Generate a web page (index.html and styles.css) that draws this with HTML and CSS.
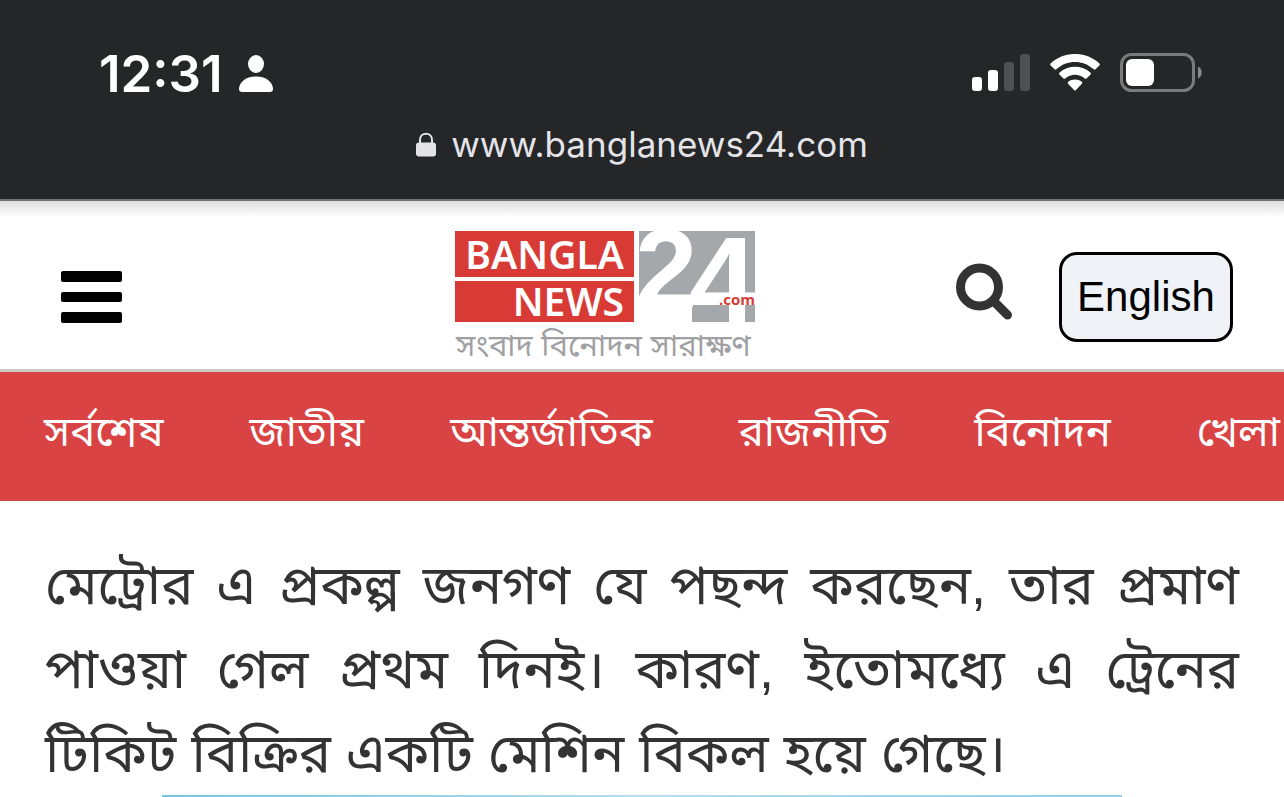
FILE: index.html
```
<!DOCTYPE html>
<html lang="bn">
<head>
    <meta charset="utf-8">
    <meta name="viewport" content="width=device-width, initial-scale=1">
    <title>banglanews24.com</title>
    <link rel="stylesheet" href="styles.css">
</head>
<body>
    <div class="browser-bar">
        <div class="status">
            <div class="status-left">
                <span class="time">12:31</span>
                <svg class="person" width="34" height="37" viewBox="0 0 34 37" fill="#fff">
                    <ellipse cx="17" cy="9" rx="8" ry="9"/>
                    <path d="M3 37C1 37 0 36 0 34C0 28 6 21.500 17 21.500S34 28 34 34C34 36 33 37 31 37Z"/>
                </svg>
            </div>
            <div class="status-right">
                <svg width="58" height="38" viewBox="0 0 58 38" fill="#fff">
                    <rect x="0" y="23" width="10" height="14" rx="3"/>
                    <rect x="16" y="16" width="10" height="21" rx="3"/>
                    <rect x="32" y="8" width="10" height="29" rx="3" fill="#505052"/>
                    <rect x="48" y="0" width="10" height="37" rx="3" fill="#505052"/>
                </svg>
                <svg width="50" height="38" viewBox="0 0 50 38" fill="#fff">
                    <path d="M.6 9.500C14-3.200 36-3.200 49.400 9.500Q50.300 10.500 49.400 11.500L45.500 15.300Q44.600 16 43.700 15.300C33 5.500 17 5.500 6.300 15.300Q5.400 16 4.500 15.300L.6 11.500Q-.3 10.500.6 9.500Z"/>
                    <path d="M9.400 18.700C18 10.800 32 10.800 40.600 18.700Q41.500 19.600 40.600 20.500L36.500 24.500Q35.600 25.200 34.700 24.500C29 19.500 21 19.500 15.300 24.500Q14.400 25.200 13.500 24.500L9.400 20.500Q8.500 19.600 9.400 18.700Z"/>
                    <path d="M18.200 27.800C22 24.700 28 24.700 31.800 27.800Q32.800 28.700 31.900 29.700L26 36Q25 37 24 36L18.100 29.700Q17.200 28.700 18.200 27.800Z"/>
                </svg>
                <svg width="83" height="40" viewBox="0 0 83 40">
                    <rect x="1.500" y="1.500" width="72" height="36" rx="10" fill="none" stroke="#7b7b7d" stroke-width="3"/>
                    <rect x="6" y="6" width="28" height="27" rx="6" fill="#fff"/>
                    <path d="M78 13.500C83 15.500 83 23.500 78 25.500Z" fill="#8b8b8d"/>
                </svg>
            </div>
        </div>
        <div class="address">
            <svg width="20" height="25" viewBox="0 0 20 25">
                <path d="M4 12V8C4 -.5 16 -.5 16 8V12" fill="none" stroke="#e4e4e8" stroke-width="2"/>
                <rect x="0" y="10.500" width="20" height="14" rx="3" fill="#e4e4e8"/>
            </svg>
            <span>www.banglanews24.com</span>
        </div>
    </div>

    <header>
        <button class="menu" aria-label="Menu">
            <svg width="61" height="52" viewBox="0 0 61 52">
                <rect x="0" y="0" width="61" height="11" rx="2"/>
                <rect x="0" y="21" width="61" height="10" rx="2"/>
                <rect x="0" y="41" width="61" height="11" rx="2"/>
            </svg>
        </button>
        <a class="logo" href="#">
            <svg width="300" height="138" viewBox="0 0 300 138">
                <rect width="179" height="46" fill="#d83b36"/>
                <rect y="50" width="179" height="41" fill="#d83b36"/>
                <text class="logo-name" x="169" y="38" text-anchor="end">BANGLA</text>
                <text class="logo-name" x="169" y="85" text-anchor="end">NEWS</text>
                <svg x="184" y="0" width="116" height="91" viewBox="0 0 116 91">
                    <path d="M0 0H116V91H53V76H0Z" fill="#a5a8ab"/>
                    <text class="logo-number" x="-4" y="76">2</text>
                    <text class="logo-number logo-number-big" x="50" y="91">4</text>
                </svg>
                <text class="logo-com" x="300" y="74" text-anchor="end">.com</text>
                <text class="logo-tagline" x="1" y="125">সংবাদ বিনোদন সারাক্ষণ</text>
            </svg>
        </a>
        <div class="tools">
            <button class="search" aria-label="Search">
                <svg width="56" height="57" viewBox="0 0 56 57" fill="none" stroke="#333">
                    <circle cx="23.500" cy="24" r="19" stroke-width="9"/>
                    <path d="M38 38.500L51.500 52" stroke-width="9" stroke-linecap="round"/>
                </svg>
            </button>
            <button class="language">English</button>
        </div>
    </header>

    <nav>
        <a href="#">সর্বশেষ</a>
        <a href="#">জাতীয়</a>
        <a href="#">আন্তর্জাতিক</a>
        <a href="#">রাজনীতি</a>
        <a href="#">বিনোদন</a>
        <a href="#">খেলা</a>
    </nav>

    <main>
        <p>মেট্রোর এ প্রকল্প জনগণ যে পছন্দ করছেন, তার প্রমাণ পাওয়া গেল প্রথম দিনই। কারণ, ইতোমধ্যে এ ট্রেনের টিকিট বিক্রির একটি মেশিন বিকল হয়ে গেছে।</p>
        <div class="banner"></div>
    </main>
</body>
</html>
```
FILE: styles.css
```
* {
    box-sizing: border-box;
}
body {
    margin: 0;
    font-family: "Liberation Sans", "Noto Sans Bengali", sans-serif;
    color: #333;
    background-color: white;
}
button {
    padding: 0;
    border: none;
    background: none;
    cursor: pointer;
}
svg {
    display: block;
}
.browser-bar {
    height: 201px;
    padding-top: 44px;
    background-color: #252628;
    border-bottom: 2px solid #717173;
    font-family: Inter, sans-serif;
}
.status {
    display: flex;
    justify-content: space-between;
    align-items: center;
    height: 58px;
    padding: 0 81px 0 99px;
}
.status-left {
    display: flex;
    align-items: center;
    gap: 16px;
}
.status-right {
    display: flex;
    align-items: center;
    gap: 20px;
}
.time {
    font-size: 51px;
    font-weight: 600;
    color: white;
}
.address {
    display: flex;
    justify-content: center;
    align-items: center;
    gap: 15px;
    height: 84px;
    font-size: 35px;
    color: #e4e4e8;
}
header {
    display: grid;
    grid-template-columns: 14fr auto 17fr;
    align-items: start;
    height: 171px;
    padding: 30px 51px 0 61px;
    background: linear-gradient(#dededf, white 16px);
    border-bottom: 3px solid #c9cbc7;
}
.menu {
    justify-self: start;
    margin-top: 40px;
}
.tools {
    display: flex;
    justify-content: flex-end;
    align-items: center;
    gap: 47px;
    margin-top: 21px;
}
.search {
    margin-bottom: 12px;
}
.language {
    width: 174px;
    height: 90px;
    border: 3px solid black;
    border-radius: 18px;
    background-color: #eff2f6;
    font-family: "Liberation Sans", sans-serif;
    font-size: 42px;
    color: black;
}
.logo-name {
    font-family: "Noto Sans", sans-serif;
    font-size: 39px;
    font-weight: 600;
    fill: white;
}
.logo-number {
    font-family: "Liberation Sans Narrow", "Liberation Sans", sans-serif;
    font-size: 112px;
    font-weight: 700;
    fill: white;
}
.logo-number-big {
    font-size: 122px;
}
.logo-com {
    font-family: "Open Sans", sans-serif;
    font-size: 15px;
    font-weight: 700;
    fill: #d83b36;
}
.logo-tagline {
    font-size: 31px;
    fill: #a0a0a3;
}
nav {
    display: flex;
    gap: 86px;
    height: 129px;
    padding: 28px 44px 0;
    background-color: #d94343;
    overflow: hidden;
}
nav a {
    flex-shrink: 0;
    font-size: 42px;
    line-height: 64px;
    color: white;
    text-decoration: none;
}
main {
    padding: 42px 45px 0;
}
main p {
    margin: 0;
    font-size: 54px;
    line-height: 84px;
    text-align: justify;
}
.banner {
    height: 2px;
    margin: 0 117px;
    background: linear-gradient(90deg, #74c5df, #b4dff0 50%, #90d0e8);
}
```
